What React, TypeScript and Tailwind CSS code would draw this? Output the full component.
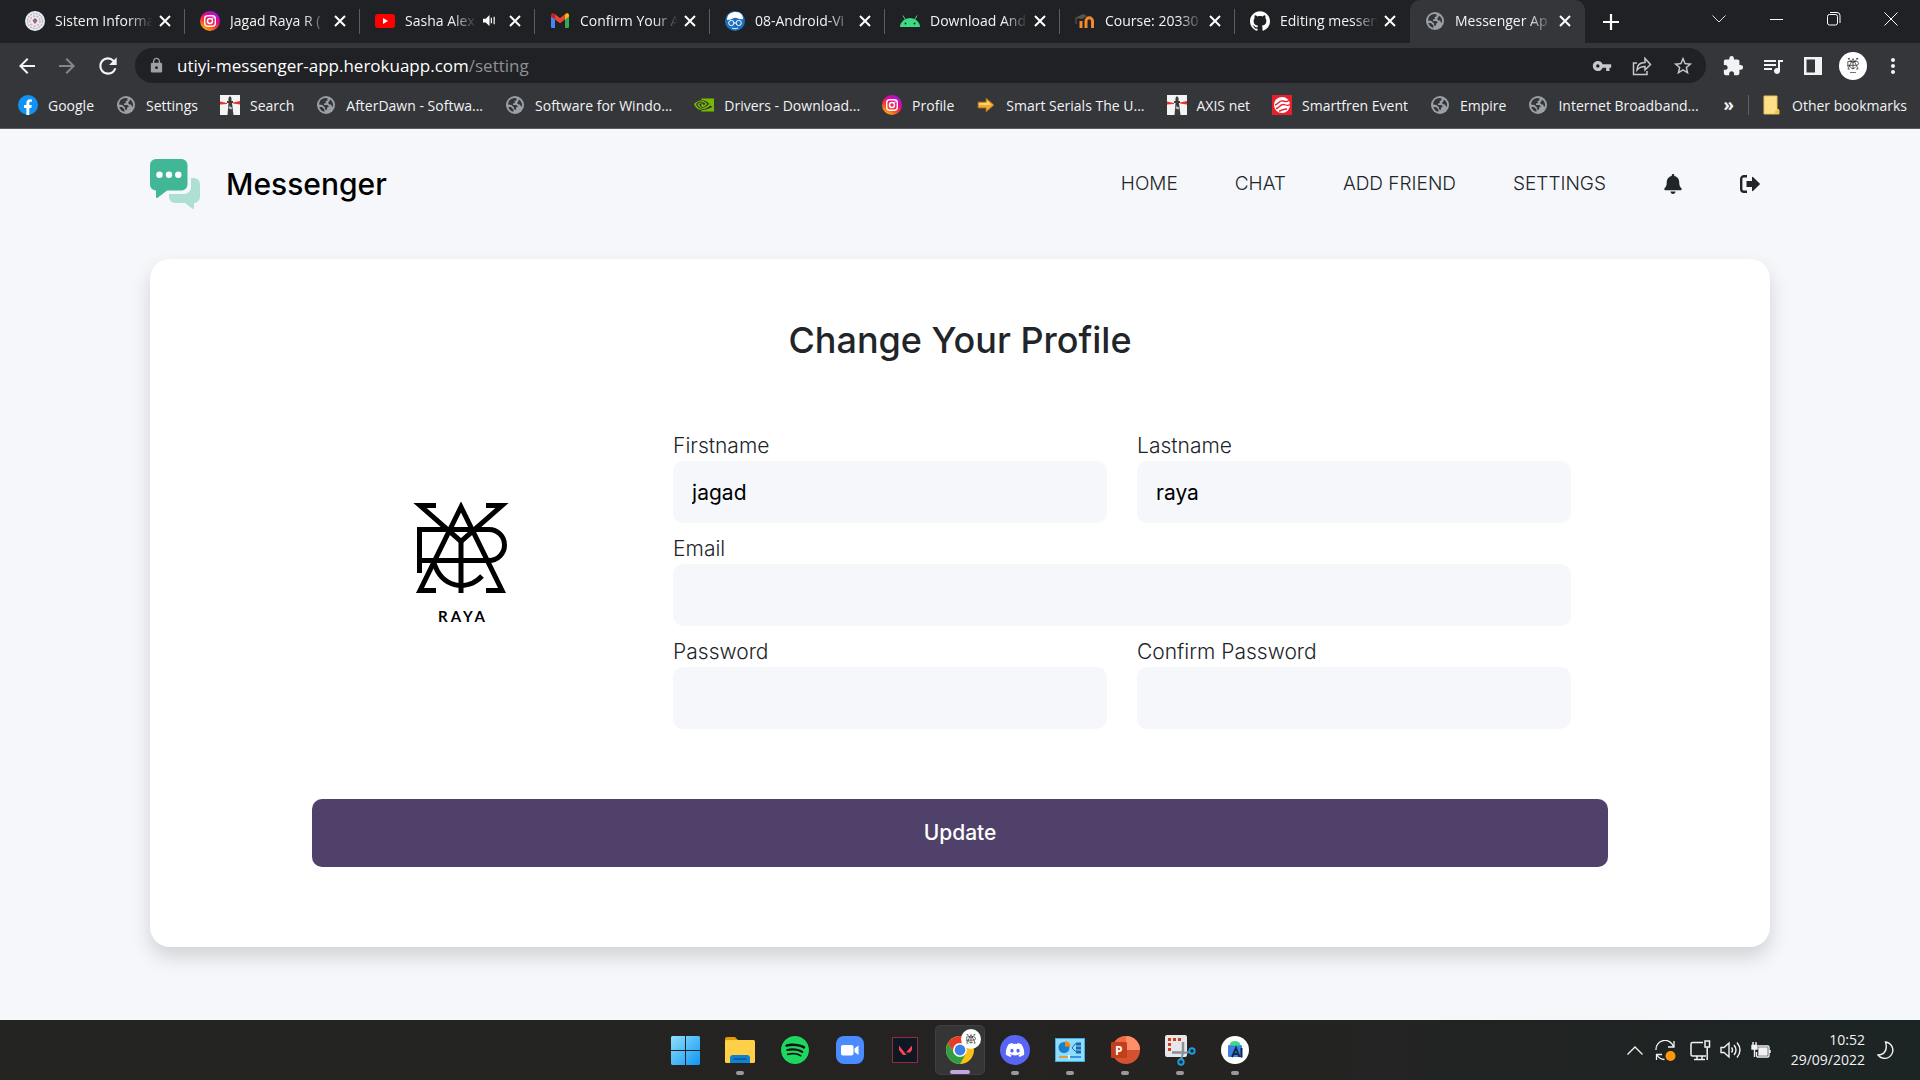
import type { ReactNode, SVGProps } from "react";
import { FaBell } from "react-icons/fa";
import { SiNvidia, SiSpotify } from "react-icons/si";
import { FaDiscord } from "react-icons/fa6";
import { SiGithub } from "react-icons/si";
import {
  MdExtension,
  MdVpnKey,
  MdLock,
  MdMoreVert,
  MdArrowBack,
  MdArrowForward,
  MdRefresh,
  MdStarOutline,
  MdQueueMusic,
} from "react-icons/md";

type IconProps = SVGProps<SVGSVGElement>;

function Monogram(props: IconProps) {
  return (
    <svg viewBox="0 0 96 92" fill="none" stroke="currentColor" strokeWidth="5" {...props}>
      <path d="M23 3.500H7L48 39.500L89 3.500H73" />
      <path d="M48 39V91" />
      <path d="M23 88.500H7L48 5L89 88.500H73" />
      <path d="M6.500 71V27.500H76a15.500 15.500 0 0 1 0 31H6" />
      <path d="M21 61C29 86 54 90 69 74" />
    </svg>
  );
}

function Globe() {
  return (
    <span className="grid size-[18px] place-items-center rounded-full bg-[#9aa0a6]">
      <svg viewBox="0 0 18 18" className="size-[18px]" fill="#35363a">
        <path d="M8 2A7 7 0 0 0 2 8.500L5.500 9L8 11.500V13l1.500 1.200L10.500 11H12L10.500 9H7V7.500L9 7L8.500 5L10.500 4.500V2.200z" />
        <path d="M12.500 5L11 7l1.500 1.500H14L15 10.500h1A7 7 0 0 0 12.800 3.500zM2.300 11A7 7 0 0 0 7.500 15.800V13.500L5 11z" />
      </svg>
    </span>
  );
}

function Instagram() {
  return (
    <svg viewBox="0 0 20 20" className="size-5" fill="none">
      <defs>
        <linearGradient id="insta" x1="0.2" y1="1" x2="0.8" y2="0">
          <stop offset="0" stopColor="#ffc107" />
          <stop offset="0.35" stopColor="#f9442e" />
          <stop offset="0.65" stopColor="#e4058f" />
          <stop offset="1" stopColor="#9a1bf0" />
        </linearGradient>
      </defs>
      <circle cx="10" cy="10" r="10" fill="url(#insta)" />
      <rect x="4.700" y="4.700" width="10.600" height="10.600" rx="3" stroke="#fff" strokeWidth="1.400" />
      <circle cx="10" cy="10" r="2.500" stroke="#fff" strokeWidth="1.400" />
      <circle cx="13" cy="7" r="0.800" fill="#fff" />
    </svg>
  );
}

function CrestIcon() {
  return (
    <svg viewBox="0 0 20 20" className="size-5" fill="none">
      <circle cx="10" cy="10" r="10" fill="#e8ebf2" />
      <circle cx="10" cy="10" r="7.500" stroke="#a9b6d6" strokeWidth="1.200" strokeDasharray="2 1" />
      <circle cx="10" cy="10" r="5" stroke="#eba898" strokeWidth="1.500" strokeDasharray="2 1.500" />
      <path d="M10 7l2.500 2.500-2.500 3.500-2.500-3.500z" fill="#4a67ad" />
      <circle cx="10" cy="10" r="1.300" fill="#e2563a" />
    </svg>
  );
}

function YouTube() {
  return (
    <svg viewBox="0 0 20 14" className="w-5">
      <rect width="20" height="14" rx="3" fill="#f00" />
      <path d="M8 4v6l5-3z" fill="#fff" />
    </svg>
  );
}

function Gmail() {
  return (
    <svg viewBox="0 0 20 15" className="w-5">
      <path d="M1 2.500V13.500A1.300 1.300 0 0 0 2.300 15H5V6z" fill="#4285f4" />
      <path d="M19 2.500V13.500A1.300 1.300 0 0 1 17.700 15H15V6z" fill="#34a853" />
      <path d="M15 1.500V6.500L19 3.500V2A2 2 0 0 0 15.800.6z" fill="#fbbc04" />
      <path d="M5 6.500V1.300L10 5L15 1.300V6.500L10 10.300z" fill="#ea4335" />
      <path d="M1 2V3.500L5 6.500V1.300L4.200.6A2 2 0 0 0 1 2z" fill="#c5221f" />
    </svg>
  );
}

function GlassesFace() {
  return (
    <svg viewBox="0 0 20 20" className="size-5" fill="none">
      <circle cx="10" cy="10" r="10" fill="#1d6fc0" />
      <path d="M2 9C2 3 6 1 11 1s7 3 7 7c-4 1-6-2-9-1S5 9 2 9z" fill="#fff" />
      <circle cx="6.300" cy="12" r="2.600" stroke="#fff" strokeWidth="1" />
      <circle cx="13.700" cy="12" r="2.600" stroke="#fff" strokeWidth="1" />
      <path d="M9 12h2M7 17c2 1 4 1 6 0" stroke="#fff" />
    </svg>
  );
}

function Android() {
  return (
    <svg viewBox="0 0 20 12" className="w-5">
      <path d="M0 12a10 9 0 0 1 20 0z" fill="#3ddc84" />
      <path d="M3 .5L5.500 5M17 .5L14.500 5" stroke="#3ddc84" />
      <circle cx="5.500" cy="8.500" r="0.900" fill="#202124" />
      <circle cx="14.500" cy="8.500" r="0.900" fill="#202124" />
    </svg>
  );
}

function Moodle() {
  return (
    <svg viewBox="0 0 20 14" className="w-5" fill="none">
      <path d="M6 14V7M11 14V7a3 3 0 0 1 6.500 0V14" stroke="#f08a2c" strokeWidth="3" />
      <path d="M0 4L8 0l4 2-5 3z" fill="#5c5347" />
      <path d="M1 4v6" stroke="#6b5b48" />
    </svg>
  );
}

function Lighthouse() {
  return (
    <svg viewBox="0 0 20 20" className="size-5">
      <rect width="20" height="20" fill="#f4f4f4" />
      <path d="M8.500 3L10 1l1.500 2v3H13v2h-1l1.500 12h-6L8.500 8H7V6h1.500z" fill="#3b3b3b" />
      <path d="M9 11l3 1.500v2l-3.500-1z" fill="#bbb" />
      <path d="M0 6.500l7 1.500v1L0 9.500zM20 6l-7 1.500V8.500L20 9.500z" fill="#e0352b" />
    </svg>
  );
}

function Facebook() {
  return (
    <svg viewBox="0 0 20 20" className="size-5">
      <circle cx="10" cy="10" r="10" fill="#1093f5" />
      <path d="M8.400 20v-7H6v-3h2.400V8c0-2.500 1.500-3.800 3.700-3.800l1.800.2v2.400h-1.300c-1 0-1.300.6-1.300 1.300V10h2.500l-.5 3h-2v7z" fill="#fff" />
    </svg>
  );
}

function ArrowIcon() {
  return (
    <svg viewBox="0 0 20 16" className="w-5">
      <path d="M2 5h8V1l8 7-8 7v-4H2z" fill="#f0a830" stroke="#9b6414" strokeWidth="0.800" />
      <path d="M3 6h8V3.500L15.500 8H3z" fill="#ffd36b" />
    </svg>
  );
}

function Smartfren() {
  return (
    <svg viewBox="0 0 20 20" className="size-5" fill="none">
      <rect width="20" height="20" fill="#e8202e" />
      <circle cx="10" cy="10" r="8" fill="#fff" />
      <path d="M3 10c3 0 4-5 8-4s4 1 6-1M4 13.500c3 0 4-4 7-4s4 2 7 0M7 16c3 0 3-2 8-2" stroke="#e8202e" strokeWidth="1.300" />
    </svg>
  );
}

function Folder() {
  return (
    <svg viewBox="0 0 17 20" className="w-[17px]">
      <path d="M1 1h13v13l2 1v4H1z" fill="#ffe08a" stroke="#e9c24e" />
      <path d="M12 19v-3l4-2v5z" fill="#f0c64a" />
    </svg>
  );
}

type Tab = { title: string; icon: ReactNode; sound?: boolean; active?: boolean };

const tabs: Tab[] = [
  { title: "Sistem Informa", icon: <CrestIcon /> },
  { title: "Jagad Raya R (", icon: <Instagram /> },
  { title: "Sasha Alex", icon: <YouTube />, sound: true },
  { title: "Confirm Your A", icon: <Gmail /> },
  { title: "08-Android-Vi", icon: <GlassesFace /> },
  { title: "Download And", icon: <Android /> },
  { title: "Course: 20330", icon: <Moodle /> },
  { title: "Editing messen", icon: <SiGithub className="size-5 text-white" /> },
  { title: "Messenger Ap", icon: <Globe />, active: true },
];

const bookmarks: { label: string; icon: ReactNode }[] = [
  { label: "Google", icon: <Facebook /> },
  { label: "Settings", icon: <Globe /> },
  { label: "Search", icon: <Lighthouse /> },
  { label: "AfterDawn - Softwa...", icon: <Globe /> },
  { label: "Software for Windo...", icon: <Globe /> },
  { label: "Drivers - Download...", icon: <SiNvidia className="size-5 text-[#76b900]" /> },
  { label: "Profile", icon: <Instagram /> },
  { label: "Smart Serials The U...", icon: <ArrowIcon /> },
  { label: "AXIS net", icon: <Lighthouse /> },
  { label: "Smartfren Event", icon: <Smartfren /> },
  { label: "Empire", icon: <Globe /> },
  { label: "Internet Broadband...", icon: <Globe /> },
];

function CloseIcon() {
  return (
    <svg viewBox="0 0 12 12" className="size-3" stroke="#fff" strokeWidth="2">
      <path d="M1 1l10 10M11 1L1 11" />
    </svg>
  );
}

function TabStrip() {
  return (
    <div className="flex h-[43px] bg-[#202124] pl-[10px]">
      <div className="flex">
        {tabs.map((t, i) => (
          <div
            key={t.title}
            className={
              t.active
                ? "flex w-[175px] items-center rounded-t-[10px] bg-[#35363a] pl-[15px] pr-[10px] pb-0.5"
                : i === 7
                  ? "flex w-[175px] items-center pl-[15px] pr-[10px] pb-0.5"
                  : "relative flex w-[175px] items-center pl-[15px] pr-[10px] pb-0.5 after:absolute after:right-0 after:top-[9px] after:h-[25px] after:w-px after:bg-[#5b5d61]"
            }
          >
            <span className="grid w-5 shrink-0 place-items-center">{t.icon}</span>
            <span
              className={
                t.sound
                  ? "ml-[10px] w-[72px] whitespace-nowrap text-[14px] text-[#f1f3f4] [mask-image:linear-gradient(to_right,black_65%,transparent)]"
                  : "ml-[10px] w-[98px] whitespace-nowrap text-[14px] text-[#f1f3f4] [mask-image:linear-gradient(to_right,black_75%,transparent)]"
              }
            >
              {t.title}
            </span>
            {t.sound && (
              <svg viewBox="0 0 14 12" className="ml-[6px] w-[13px]" fill="#fff">
                <path d="M0 4h3l4-4v12L3 8H0z" />
                <path d="M9 3v6M12 2v8" stroke="#fff" strokeWidth="1.300" />
              </svg>
            )}
            <button type="button" aria-label="Close tab" className="ml-auto grid size-5 place-items-center">
              <CloseIcon />
            </button>
          </div>
        ))}
      </div>
      <button type="button" aria-label="New tab" className="ml-4 grid w-5 place-items-center">
        <svg viewBox="0 0 16 16" className="size-4" stroke="#fff" strokeWidth="2.200">
          <path d="M8 0v16M0 8h16" />
        </svg>
      </button>
      <div className="ml-auto flex h-[38px] w-[230px]">
        <button type="button" aria-label="Search tabs" className="grid flex-1 place-items-center">
          <svg viewBox="0 0 14 8" className="w-[14px]" fill="none" stroke="#ddd">
            <path d="M.5.5L7 7l6.500-6.500" />
          </svg>
        </button>
        <button type="button" aria-label="Minimize" className="grid flex-1 place-items-center">
          <span className="h-px w-[13px] bg-white" />
        </button>
        <button type="button" aria-label="Restore" className="grid flex-1 place-items-center">
          <svg viewBox="0 0 14 14" className="size-[14px]" fill="none" stroke="#fff">
            <rect x="0.500" y="2.500" width="10" height="10.500" rx="2" />
            <path d="M3 .5h7a3 3 0 0 1 3 3V11" />
          </svg>
        </button>
        <button type="button" aria-label="Close" className="grid flex-1 place-items-center">
          <svg viewBox="0 0 14 14" className="size-[14px]" stroke="#fff">
            <path d="M.5.500l13 13M13.500.500l-13 13" />
          </svg>
        </button>
      </div>
    </div>
  );
}

function Toolbar() {
  return (
    <div className="flex items-center bg-[#35363a] pt-[5px] pb-px pl-[15px] pr-[15px] text-[#f1f3f4]">
      <button type="button" aria-label="Back">
        <MdArrowBack className="size-6" />
      </button>
      <button type="button" aria-label="Forward" className="ml-4 text-[#85878a]">
        <MdArrowForward className="size-6" />
      </button>
      <button type="button" aria-label="Reload" className="ml-4">
        <MdRefresh className="size-[26px]" />
      </button>
      <div className="ml-[14px] flex h-[35px] flex-1 items-center rounded-full bg-[#202124] pl-[13px] pr-3">
        <MdLock className="size-[17px] text-[#9aa0a6]" />
        <span className="ml-3 text-[17px] text-white">
          utiyi-messenger-app.herokuapp.com<span className="text-[#8d9196]">/setting</span>
        </span>
        <div className="ml-auto flex items-center gap-5 text-[#c5c8cc]">
          <MdVpnKey className="size-5" />
          <svg viewBox="0 0 20 20" className="size-5" fill="none" stroke="currentColor" strokeWidth="1.500">
            <path d="M5 7H1.500V18.500H15V15" />
            <path d="M5 14c0-5 3-7.500 8-7.500V2.500L18.500 8.500 13 14V10.500c-4 0-6 1-8 3.500z" />
          </svg>
          <MdStarOutline className="size-[22px]" />
        </div>
      </div>
      <div className="ml-4 flex items-center">
        <MdExtension className="size-[22px]" />
        <MdQueueMusic className="ml-[17px] size-6" />
        <svg viewBox="0 0 18 18" className="ml-[19px] size-[18px]">
          <path d="M0 0h18v18H0zM2.500 2.500v13H11v-13z" fill="currentColor" fillRule="evenodd" />
        </svg>
        <span className="ml-[17px] flex size-7 flex-col items-center justify-center rounded-full bg-white text-black">
          <Monogram className="w-3" />
          <span className="mt-0.5 h-px w-1.5 bg-neutral-500" />
        </span>
        <MdMoreVert className="ml-[14px] size-6" />
      </div>
    </div>
  );
}

function BookmarksBar() {
  return (
    <div className="flex h-[45px] items-center border-b border-[#5b5c60] bg-[#35363a] pb-0.5 pl-[18px] pr-[13px] text-[14px] text-[#f1f3f4]">
      <div className="flex gap-[22px]">
        {bookmarks.map((b) => (
          <a key={b.label} href="#" className="flex items-center gap-[10px] whitespace-nowrap">
            <span className="grid w-5 place-items-center">{b.icon}</span>
            {b.label}
          </a>
        ))}
      </div>
      <div className="ml-auto flex items-center">
        <span className="text-[17px] font-bold leading-5">»</span>
        <span className="ml-[14px] h-5 w-px bg-[#5f6165]" />
        <a href="#" className="ml-[14px] flex items-center gap-3 whitespace-nowrap">
          <Folder />
          Other bookmarks
        </a>
      </div>
    </div>
  );
}

function Header() {
  return (
    <header className="flex items-center text-[#212529]">
      <svg viewBox="0 0 50 50" className="size-[50px]">
        <path d="M41 19h3a6 6 0 0 1 6 6v13a6 6 0 0 1-6 6v5a1 1 0 0 1-1.600.8L35 44H25a6 6 0 0 1-6-6v-3h15a7 7 0 0 0 7-7z" fill="#aedfd3" />
        <path d="M6 0h25.500a6 6 0 0 1 6 6v19.500a6 6 0 0 1-6 6H17L7.700 38.800A1 1 0 0 1 6 38V31.500a6 6 0 0 1-6-6V6a6 6 0 0 1 6-6z" fill="#41b798" />
        <circle cx="9.500" cy="15.700" r="3.200" fill="#fff" />
        <circle cx="19" cy="15.700" r="3.200" fill="#fff" />
        <circle cx="28.300" cy="15.700" r="3.200" fill="#fff" />
      </svg>
      <span className="ml-[26px] text-[30px] font-medium text-black">Messenger</span>
      <nav className="ml-auto flex items-center gap-[57px] pr-[10px] text-[19px] font-light">
        <a href="#">HOME</a>
        <a href="#">CHAT</a>
        <a href="#">ADD FRIEND</a>
        <a href="#">SETTINGS</a>
        <a href="#" aria-label="Notifications">
          <FaBell className="size-5" />
        </a>
        <a href="#" aria-label="Log out">
          <svg viewBox="0 0 20 18" className="w-5" fill="none">
            <path d="M7 1.200H4A2.800 2.800 0 0 0 1.200 4v10A2.800 2.800 0 0 0 4 16.800H7" stroke="currentColor" strokeWidth="2.400" />
            <path d="M6.500 6H12V2.500a.6.6 0 0 1 1-.5l6.700 6.500a.7.7 0 0 1 0 1L13 16a.6.6 0 0 1-1-.5V12H6.500z" fill="currentColor" />
          </svg>
        </a>
      </nav>
    </header>
  );
}

function Field({ id, label, type = "text", value, wide }: { id: string; label: string; type?: string; value?: string; wide?: boolean }) {
  return (
    <div className={wide ? "col-span-2" : ""}>
      <label htmlFor={id} className="block text-[21px] font-light leading-[30px] text-[#212529]">
        {label}
      </label>
      <input
        id={id}
        type={type}
        defaultValue={value}
        className="block h-[62px] w-full rounded-[10px] bg-[#f5f7fb] px-[19px] text-[21px] text-black outline-none"
      />
    </div>
  );
}

function ProfileCard() {
  return (
    <form className="mt-[50px] flex flex-col items-center rounded-[20px] bg-white pt-[56px] pb-[80px] shadow-[0_10px_20px_rgba(0,0,0,0.15)]">
      <h1 className="text-[36px] font-medium leading-[50px] text-[#212529]">Change Your Profile</h1>
      <div className="mt-[66px] flex w-4/5 items-center">
        <div className="flex w-[23%] flex-col items-center pb-8">
          <Monogram className="w-24 text-black" />
          <span className="mt-3 pl-1 font-['Lato'] text-[15px] font-bold leading-5 tracking-[3px] text-black">RAYA</span>
        </div>
        <div className="ml-[63px] mr-[37px] grid flex-1 grid-cols-2 gap-x-[30px] gap-y-[11px]">
          <Field id="first" label="Firstname" value="jagad" />
          <Field id="last" label="Lastname" value="raya" />
          <Field id="email" label="Email" type="email" wide />
          <Field id="password" label="Password" type="password" />
          <Field id="confirm" label="Confirm Password" type="password" />
        </div>
      </div>
      <button type="button" className="mt-[70px] h-[68px] w-4/5 rounded-[10px] bg-[#4f4169] text-[21px] font-medium text-white">
        Update
      </button>
    </form>
  );
}

function ExplorerIcon() {
  return (
    <svg viewBox="0 0 30 28" className="w-[30px]">
      <path d="M0 3a2 2 0 0 1 2-2h8l3 3h4v6H0z" fill="#e09b0b" />
      <rect y="4" width="30" height="23" rx="1.500" fill="#ffcf48" />
      <path d="M5 27v-5a3 3 0 0 1 3-3h14a3 3 0 0 1 3 3v5z" fill="#1080d0" />
      <path d="M8.500 23h13" stroke="#0a4d8c" strokeWidth="1.300" />
    </svg>
  );
}

function ChromeIcon() {
  return (
    <svg viewBox="0 0 28 28" className="size-7">
      <circle cx="14" cy="14" r="14" fill="#fbc116" />
      <path d="M1.900 7A14 14 0 0 1 26.100 7H14a7 7 0 0 0-6.100 10.500z" fill="#e33b2e" />
      <path d="M1.900 7A14 14 0 0 0 14 28l6-10.500a7 7 0 0 1-12.100 0z" fill="#2c9f48" />
      <circle cx="14" cy="14" r="6.800" fill="#fff" />
      <circle cx="14" cy="14" r="5.400" fill="#3a80e8" />
    </svg>
  );
}

const apps: { name: string; icon: ReactNode; running?: boolean; active?: boolean }[] = [
  {
    name: "Start",
    icon: (
      <svg viewBox="0 0 29 29" className="w-[29px]">
        <defs>
          <linearGradient id="win" x1="0" y1="0" x2="1" y2="1">
            <stop stopColor="#8fe0fb" />
            <stop offset="1" stopColor="#0e95f3" />
          </linearGradient>
        </defs>
        <path d="M1 0h13v14H0V1zM15 0h13l1 1v13H15zM0 15h14v14H1l-1-1zM15 15h14v13l-1 1H15z" fill="url(#win)" />
      </svg>
    ),
  },
  { name: "File Explorer", icon: <ExplorerIcon />, running: true },
  { name: "Spotify", icon: <span className="rounded-full bg-[#121212]"><SiSpotify className="size-7 text-[#1ed760]" /></span> },
  {
    name: "Zoom",
    icon: (
      <svg viewBox="0 0 28 28" className="size-7">
        <rect width="28" height="28" rx="8" fill="#4a8cff" />
        <rect x="5" y="9" width="12.500" height="10.500" rx="2" fill="#fff" />
        <path d="M18.500 12.500L22.500 9.500V19L18.500 16z" fill="#fff" />
      </svg>
    ),
  },
  {
    name: "Valorant",
    icon: (
      <svg viewBox="0 0 26 26" className="size-[26px]">
        <rect x="0.500" y="0.500" width="25" height="25" fill="#0f1822" stroke="#8a2f3b" />
        <path d="M7 8.500l7.500 9.500H11L7 13zM20 8.500V13l-2 2.500h-4z" fill="#fb4454" />
      </svg>
    ),
  },
  {
    name: "Google Chrome",
    active: true,
    icon: (
      <span className="relative block size-7">
        <ChromeIcon />
        <span className="absolute -right-[7px] -top-[7px] grid size-5 place-items-center rounded-full bg-white text-black">
          <Monogram className="w-[10px]" />
        </span>
      </span>
    ),
  },
  {
    name: "Discord",
    running: true,
    icon: (
      <span className="grid size-[30px] place-items-center rounded-full bg-[#5865f2] text-white">
        <FaDiscord className="size-5" />
      </span>
    ),
  },
  {
    name: "Control Panel",
    running: true,
    icon: (
      <svg viewBox="0 0 30 24" className="w-[30px]">
        <rect x="0.500" y="0.500" width="29" height="23" fill="#8fdcfc" stroke="#3caee8" />
        <circle cx="9" cy="9.500" r="5.500" fill="#1580d2" />
        <path d="M10 8.500V3a5.500 5.500 0 0 1 5.500 5.500z" fill="#f38b13" />
        <path d="M17 10l3-4h2M17 10l3 3h2" stroke="#1a6fb5" fill="none" />
        <path d="M21 4.500h5v3h-5zM21 8.500h5v3h-5zM21 12.500h5v3h-5z" fill="#1668b0" />
        <path d="M4 19h11" stroke="#f38b13" strokeWidth="1.500" />
        <path d="M15 19h11" stroke="#1580d2" strokeWidth="1.500" />
        <path d="M14 17v4" stroke="#fff" strokeWidth="1.500" />
      </svg>
    ),
  },
  {
    name: "PowerPoint",
    running: true,
    icon: (
      <svg viewBox="0 0 29 28" className="w-[29px]">
        <circle cx="15" cy="14" r="14" fill="#d35230" />
        <path d="M15 0a14 14 0 0 1 14 14H15z" fill="#ff8f6b" />
        <path d="M15 0A14 14 0 0 0 1 14h14z" fill="#ed6c47" />
        <rect y="6" width="16" height="16" rx="1.300" fill="#c43e1c" />
        <text x="4" y="18.500" fill="#fff" fontFamily="Open Sans, sans-serif" fontWeight="700" fontSize="12">P</text>
      </svg>
    ),
  },
  {
    name: "Snipping Tool",
    running: true,
    icon: (
      <svg viewBox="0 0 31 31" className="w-[31px]" fill="none">
        <rect width="22" height="22" rx="2" fill="#e6e7ea" />
        <path d="M16 4.500H4.500V17" stroke="#d8391b" strokeWidth="3" strokeDasharray="3 2" />
        <path d="M18 7v12M7 17.500h12" stroke="#8a9097" strokeWidth="2.500" />
        <path d="M16 25l2-7 7-1" stroke="#8a9097" strokeWidth="2" />
        <circle cx="27" cy="16" r="2.700" stroke="#1b9de2" strokeWidth="1.900" />
        <circle cx="16" cy="27" r="2.700" stroke="#1b9de2" strokeWidth="1.900" />
      </svg>
    ),
  },
  {
    name: "Android Studio",
    running: true,
    icon: (
      <svg viewBox="0 0 28 28" className="size-7" fill="none">
        <circle cx="14" cy="14" r="14" fill="#fff" />
        <rect x="7" y="9" width="14" height="12" rx="1" fill="#3f7fe8" />
        <path d="M8.500 9.500a5.500 4.500 0 0 1 11 0z" fill="#3ddc84" />
        <path d="M11 21l4-9 3.500 9M12.500 18h5M20.500 12v9.500" stroke="#0b2a45" strokeWidth="2" />
      </svg>
    ),
  },
];

function Tray() {
  return (
    <div className="flex h-full items-center justify-end pr-[26px] text-[#f2f2f2]">
      <svg viewBox="0 0 16 9" className="w-4" fill="none" stroke="currentColor" strokeWidth="1.300">
        <path d="M.5 8.500L8 1l7.500 7.500" />
      </svg>
      <svg viewBox="0 0 21 21" className="ml-3 w-[21px]" fill="none" stroke="currentColor" strokeWidth="1.300">
        <path d="M1 10A9 9 0 0 1 18.500 6.500M19 1V7H13M9.500 19.500A9 9 0 0 1 2 15M1.500 20V14.500H7" />
        <circle cx="15.500" cy="16" r="5" fill="#ff9809" stroke="none" />
      </svg>
      <svg viewBox="0 0 21 21" className="ml-[14px] w-[21px]" fill="none" stroke="currentColor" strokeWidth="1.500">
        <path d="M13 2.500H2.500a1.500 1.500 0 0 0-1.500 1.500v10.500A1.500 1.500 0 0 0 2.500 16H16M7 16v3.500M12 16v3.500M4 19.500h11M15 1h4.500v6H15zM17.200 7v13" />
      </svg>
      <svg viewBox="0 0 21 18" className="ml-[9px] w-[21px]" fill="none" stroke="currentColor" strokeWidth="1.400">
        <path d="M1 6.500h3L9 2v14L4 11.500H1z" />
        <path d="M11.500 6.500q2 2.500 0 5M14 4q4 5 0 10M17 1.500q6 7.500 0 15" />
      </svg>
      <svg viewBox="0 0 20 17" className="ml-[10px] w-5" fill="none" stroke="currentColor" strokeWidth="1.400">
        <path d="M7 4h9.500a1.500 1.500 0 0 1 1.500 1.500v8a1.500 1.500 0 0 1-1.500 1.500H7a1.500 1.500 0 0 1-1.500-1.500V10M19 8v3" />
        <path d="M8 6h8v7H8z" fill="currentColor" />
        <path d="M1 3.500h5V7H1zM2 0v3M5 0v3M3.500 7v8" fill="currentColor" />
      </svg>
      <div className="ml-5 text-right text-[14px] leading-5">
        <div>10:52</div>
        <div>29/09/2022</div>
      </div>
      <svg viewBox="0 0 17 18" className="ml-3 w-[17px]" fill="none" stroke="currentColor" strokeWidth="1.400">
        <path d="M8.500 1a8.200 8.200 0 1 1-7.500 13c6 0 10-5 7.500-13z" />
      </svg>
    </div>
  );
}

function Taskbar() {
  return (
    <footer className="flex h-[60px] shrink-0 bg-linear-to-r from-[#242422] via-[#242322] via-65% to-[#1c2424]">
      <div className="flex-1" />
      <div className="flex items-center gap-[5px]">
        {apps.map((a) => (
          <button
            key={a.name}
            type="button"
            aria-label={a.name}
            className={
              a.active
                ? "relative grid size-[50px] place-items-center rounded-[5px] border border-[#404040] bg-[#353535]"
                : "relative grid size-[50px] place-items-center"
            }
          >
            {a.icon}
            {a.active && <span className="absolute bottom-0 left-[14px] h-1 w-5 rounded-full bg-[#c3a5df]" />}
            {a.running && <span className="absolute bottom-0 left-[21px] h-1 w-2 rounded-full bg-[#9a9a9a]" />}
          </button>
        ))}
      </div>
      <div className="flex-1">
        <Tray />
      </div>
    </footer>
  );
}

export default function App() {
  return (
    <div className="flex min-h-screen flex-col bg-[#f5f7fb] font-['Open_Sans',sans-serif]">
      <TabStrip />
      <Toolbar />
      <BookmarksBar />
      <main className="flex-1 px-[150px] pt-[30px] font-['Inter',sans-serif]">
        <Header />
        <ProfileCard />
      </main>
      <Taskbar />
    </div>
  );
}
